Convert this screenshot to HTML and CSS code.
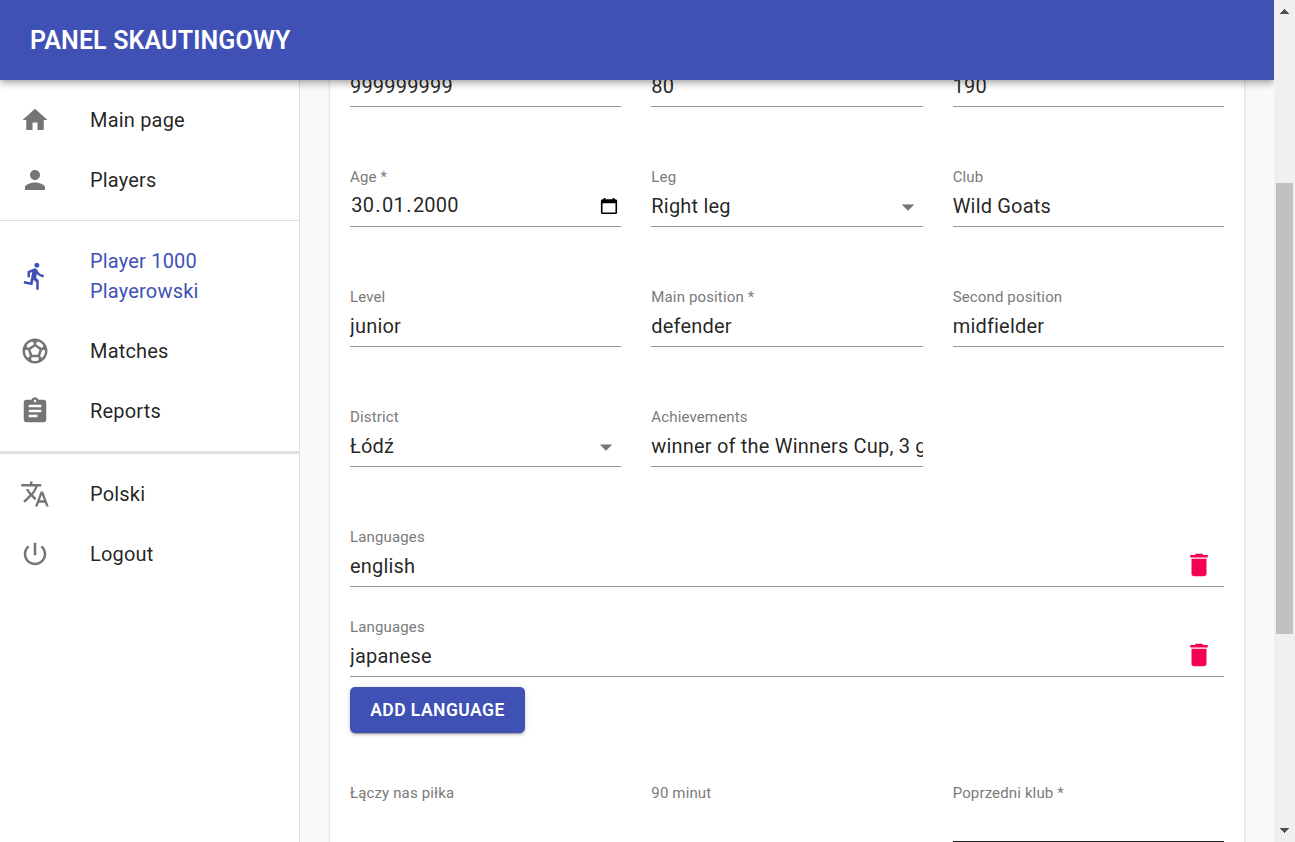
FILE: index.html
```html
<!DOCTYPE html>
<html lang="en">
<head>
<meta charset="utf-8">
<title>Panel Skautingowy</title>
<link rel="stylesheet" href="styles.css">
</head>
<body>
<div class="app">
  <div class="page">
    <header class="topbar"><h1 class="brand">PANEL SKAUTINGOWY</h1></header>
    <div class="body">
      <nav class="sidebar">
        <ul class="menu">
          <li class="item"><svg class="icon" viewBox="0 0 24 24"><path d="M10 20v-6h4v6h5v-8h3L12 3 2 12h3v8z"/></svg><span>Main page</span></li>
          <li class="item"><svg class="icon" viewBox="0 0 24 24"><path d="M12 12c2.210 0 4-1.790 4-4s-1.790-4-4-4-4 1.790-4 4 1.790 4 4 4zm0 2c-2.670 0-8 1.340-8 4v2h16v-2c0-2.660-5.330-4-8-4z"/></svg><span>Players</span></li>
        </ul>
        <ul class="menu menu-player">
          <li class="item active"><svg class="icon" viewBox="0 0 24 24"><path d="M13.490 5.480c1.100 0 2-.9 2-2s-.9-2-2-2-2 .9-2 2 .9 2 2 2zm-3.600 13.900l1-4.400 2.100 2v6h2v-7.500l-2.100-2 .6-3c1.300 1.500 3.300 2.500 5.500 2.500v-2c-1.900 0-3.500-1-4.300-2.400l-1-1.600c-.4-.6-1-1-1.700-1-.3 0-.5.1-.8.1l-5.200 2.200v4.700h2v-3.400l1.800-.7-1.600 8.100-4.900-1-.4 2 7 1.400z"/></svg><span>Player 1000<br>Playerowski</span></li>
          <li class="item"><svg class="icon" viewBox="0 0 24 24"><path d="M12 2C6.480 2 2 6.480 2 12s4.480 10 10 10 10-4.480 10-10S17.520 2 12 2zm1 3.300l1.350-.95c1.820.56 3.370 1.760 4.380 3.340l-.39 1.340-1.350.46L13 6.700V5.300zm-3.350-.95L11 5.300v1.400L7.010 9.490l-1.350-.46-.39-1.340c1.010-1.570 2.560-2.770 4.380-3.340zM7.080 17.110l-1.140.1C4.730 15.810 4 13.990 4 12c0-.12.010-.23.020-.35l1-.73 1.380.48 1.460 4.340-.78 1.370zm7.420 2.480c-.79.26-1.630.41-2.500.41s-1.710-.15-2.500-.41l-.69-1.490.64-1.100h5.110l.64 1.110-.7 1.480zM14.270 15H9.730l-1.350-4.020L12 8.440l3.630 2.540L14.270 15zm3.790 2.210l-1.140-.1-.79-1.370 1.460-4.340 1.390-.47 1 .73c.010.110.020.220.020.340 0 1.990-.73 3.810-1.940 5.210z"/></svg><span>Matches</span></li>
          <li class="item"><svg class="icon" viewBox="0 0 24 24"><path d="M19 3h-4.180C14.400 1.840 13.300 1 12 1c-1.300 0-2.400.84-2.820 2H5c-1.100 0-2 .9-2 2v14c0 1.100.9 2 2 2h14c1.100 0 2-.9 2-2V5c0-1.100-.9-2-2-2zm-7 0c.55 0 1 .45 1 1s-.45 1-1 1-1-.45-1-1 .45-1 1-1zm2 14H7v-2h7v2zm3-4H7v-2h10v2zm0-4H7V7h10v2z"/></svg><span>Reports</span></li>
        </ul>
        <ul class="menu menu-account">
          <li class="item"><svg class="icon" viewBox="0 0 24 24"><path d="M12.870 15.070l-2.540-2.510.03-.03c1.740-1.940 2.980-4.170 3.710-6.530H17V4h-7V2H8v2H1v1.990h11.170C11.500 7.920 10.440 9.750 9 11.350 8.070 10.320 7.300 9.190 6.690 8h-2c.73 1.630 1.730 3.170 2.980 4.560l-5.090 5.020L4 19l5-5 3.110 3.110.76-2.040zM18.500 10h-2L12 22h2l1.120-3h4.750L21 22h2l-4.500-12zm-2.620 7l1.620-4.330L19.120 17h-3.240z"/></svg><span>Polski</span></li>
          <li class="item"><svg class="icon" viewBox="0 0 24 24"><path d="M13 3h-2v10h2V3zm4.830 2.170l-1.420 1.420C17.990 7.860 19 9.810 19 12c0 3.870-3.130 7-7 7s-7-3.130-7-7c0-2.190 1.010-4.140 2.580-5.420L6.170 5.170C4.230 6.820 3 9.260 3 12c0 4.970 4.030 9 9 9s9-4.030 9-9c0-2.740-1.230-5.180-3.170-6.830z"/></svg><span>Logout</span></li>
        </ul>
      </nav>
      <main class="content">
        <form class="card">
          <div class="fields">
            <div class="field"><div class="value">999999999</div></div>
            <div class="field"><div class="value">80</div></div>
            <div class="field"><div class="value">190</div></div>

            <div class="field"><label>Age *</label><div class="value"><span class="date"><span>30</span><span>.</span><span>01</span><span>.</span><span>2000</span></span><svg class="calendar" viewBox="0 0 20 20"><path fill-rule="evenodd" d="M4 1h2v1.500h8V1h2v1.500h1.200A1.800 1.800 0 0 1 19 4.300v12.900a1.800 1.800 0 0 1-1.800 1.800H2.800A1.800 1.800 0 0 1 1 17.200V4.300a1.800 1.800 0 0 1 1.800-1.800H4zM2.800 7v10.200h14.400V7z"/></svg></div></div>
            <div class="field"><label>Leg</label><div class="value"><span>Right leg</span><svg class="icon caret" viewBox="0 0 24 24"><path d="M7 10l5 5 5-5z"/></svg></div></div>
            <div class="field"><label>Club</label><div class="value">Wild Goats</div></div>

            <div class="field"><label>Level</label><div class="value">junior</div></div>
            <div class="field"><label>Main position *</label><div class="value">defender</div></div>
            <div class="field"><label>Second position</label><div class="value">midfielder</div></div>

            <div class="field"><label>District</label><div class="value"><span>Łódź</span><svg class="icon caret" viewBox="0 0 24 24"><path d="M7 10l5 5 5-5z"/></svg></div></div>
            <div class="field"><label>Achievements</label><div class="value">winner of the Winners Cup, 3 g</div></div>
          </div>
          <div class="languages">
            <div class="field"><label>Languages</label><div class="value"><span>english</span><svg class="icon trash" viewBox="0 0 24 24"><path d="M6 19c0 1.100.9 2 2 2h8c1.100 0 2-.9 2-2V7H6v12zM19 4h-3.500l-1-1h-5l-1 1H5v2h14V4z"/></svg></div></div>
            <div class="field"><label>Languages</label><div class="value"><span>japanese</span><svg class="icon trash" viewBox="0 0 24 24"><path d="M6 19c0 1.100.9 2 2 2h8c1.100 0 2-.9 2-2V7H6v12zM19 4h-3.500l-1-1h-5l-1 1H5v2h14V4z"/></svg></div></div>
          </div>
          <button class="add" type="button">ADD LANGUAGE</button>
          <div class="fields">
            <div class="field"><label>Łączy nas piłka</label><div class="value"></div></div>
            <div class="field"><label>90 minut</label><div class="value"></div></div>
            <div class="field hovered"><label>Poprzedni klub *</label><div class="value"></div></div>
          </div>
        </form>
      </main>
    </div>
  </div>
  <div class="scrollbar">
    <svg class="arrow" viewBox="0 0 9 5" shape-rendering="crispEdges"><path d="M0 5L4.500 0 9 5z"/></svg>
    <div class="track"><div class="thumb"></div></div>
    <svg class="arrow" viewBox="0 0 9 5" shape-rendering="crispEdges"><path d="M0 0L4.500 5 9 0z"/></svg>
  </div>
</div>
</body>
</html>
```
FILE: styles.css
```css
* { box-sizing: border-box; }
body {
  margin: 0;
  background: #fafafa;
  color: rgba(0, 0, 0, 0.87);
  font: 400 20px/30px Roboto, "Liberation Sans", sans-serif;
  letter-spacing: 0.00938em;
}
.app { display: flex; height: 100vh; overflow: hidden; }
.page { display: flex; flex: 1; flex-direction: column; min-width: 0; overflow: hidden; }
.topbar {
  position: relative;
  z-index: 2;
  display: flex;
  flex: none;
  align-items: center;
  height: 80px;
  padding: 2px 0 0 30px;
  background: #3f51b5;
  color: #fff;
  box-shadow: 0 2.500px 5px -1.250px rgba(0, 0, 0, 0.2), 0 5px 6.250px rgba(0, 0, 0, 0.14), 0 1.250px 12.500px rgba(0, 0, 0, 0.12);
}
.brand { margin: 0; font-size: 25px; font-weight: 600; line-height: 40px; letter-spacing: 0.0055em; }
.body { display: flex; flex: 1; min-height: 0; }
.sidebar { flex: none; width: 300px; background: #fff; border-right: 1px solid #e0e0e0; }
.menu { margin: 0; padding: 10px 0; list-style: none; }
.menu-player { border-top: 1px solid #e0e0e0; }
.menu-account { border-top: 3px solid #e0e0e0; }
.item { display: flex; align-items: center; gap: 40px; padding: 15px 20px; }
.icon { flex: none; width: 30px; height: 30px; fill: #757575; }
.active { color: #3f51b5; }
.active .icon { fill: #3f51b5; }
.content { flex: 1; min-width: 0; padding: 0 30px; overflow: hidden; }
/* The form is scrolled, so its first row is partly under the top bar. */
.card {
  height: 900px;
  margin-top: -53px;
  padding: 20px;
  background: #fff;
  box-shadow: 0 2.500px 1.250px -1.250px rgba(0, 0, 0, 0.2), 0 1.250px 1.250px rgba(0, 0, 0, 0.14), 0 1.250px 3.750px rgba(0, 0, 0, 0.12);
}
.fields { display: grid; grid-template-columns: repeat(3, minmax(0, 1fr)); gap: 60px 30px; }
.field { display: flex; flex-direction: column; justify-content: flex-end; height: 60px; }
.field label { height: 20px; color: #7a7a7a; font-size: 15px; line-height: 20px; letter-spacing: 0.00938em; }
.value {
  display: flex;
  align-items: center;
  justify-content: space-between;
  height: 40px;
  padding-bottom: 1px;
  border-bottom: 1px solid #949494;
  overflow: hidden;
  white-space: nowrap;
}
.hovered .value { border-bottom: 2px solid #212121; }
.date { display: flex; gap: 1.250px; padding: 0 0 2px 1.250px; }
.calendar { width: 18px; height: 18px; margin-right: 3px; fill: #000; }
.caret { margin-top: 2px; }
.trash { margin: 0 10px 2px 0; fill: #f50057; }
.languages { display: flex; flex-direction: column; gap: 30px; margin-top: 60px; }
.add {
  display: block;
  width: 175px;
  height: 46px;
  margin: 10px 0 50px;
  padding: 0;
  border: 0;
  border-radius: 5px;
  background: #3f51b5;
  color: #fff;
  font: 600 17.500px/30px Roboto, sans-serif;
  letter-spacing: 0.026em;
  box-shadow: 0 3px 1px -2px rgba(0, 0, 0, 0.2), 0 2px 2px rgba(0, 0, 0, 0.14), 0 1px 6px rgba(0, 0, 0, 0.12);
}
.scrollbar { display: flex; flex: none; flex-direction: column; align-items: center; width: 21px; padding: 9px 0; background: #f0f0f0; }
.arrow { flex: none; width: 9px; height: 5px; fill: #505050; }
.track { flex: 1; padding-top: 169px; }
.thumb { width: 17px; height: 451px; background: #c1c1c1; }
```
